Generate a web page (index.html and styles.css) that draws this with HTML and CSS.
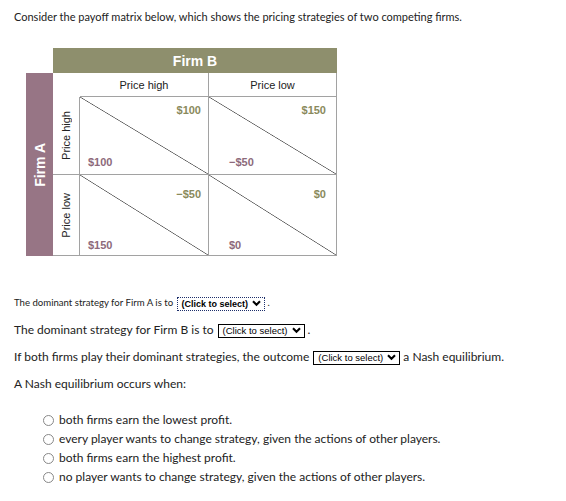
FILE: index.html
```html
<!DOCTYPE html>
<html>
<head>
<meta charset="utf-8">
<link rel="stylesheet" href="styles.css">
</head>
<body>
<p class="intro">Consider the payoff matrix below, which shows the pricing strategies of two competing firms.</p>

<div class="matrix">
  <div class="firm-b">Firm B</div>
  <div class="firm-a"><span>Firm A</span></div>
  <div class="corner"></div>
  <div class="colhead c1">Price high</div>
  <div class="colhead c2">Price low</div>

  <div class="rowhead r1"><span>Price high</span></div>
  <div class="cell c1 r1"><span class="pb">$100</span><span class="pa">$100</span></div>
  <div class="cell c2 r1"><span class="pb">$150</span><span class="pa">&minus;$50</span></div>

  <div class="rowhead r2"><span>Price low</span></div>
  <div class="cell c1 r2"><span class="pb">&minus;$50</span><span class="pa">$150</span></div>
  <div class="cell c2 r2"><span class="pb">$0</span><span class="pa">$0</span></div>
</div>

<p class="q small">The dominant strategy for Firm A is to <span class="dd focus">(Click to select)<svg class="chev" viewBox="0 0 10 8"><path d="M1 1.5 L5 5.5 L9 1.5" fill="none" stroke="#000" stroke-width="2.4"/></svg></span> .</p>
<p class="q">The dominant strategy for Firm B is to <span class="dd">(Click to select)<svg class="chev" viewBox="0 0 10 8"><path d="M1 1.5 L5 5.5 L9 1.5" fill="none" stroke="#000" stroke-width="2.4"/></svg></span> .</p>
<p class="q">If both firms play their dominant strategies, the outcome <span class="dd">(Click to select)<svg class="chev" viewBox="0 0 10 8"><path d="M1 1.5 L5 5.5 L9 1.5" fill="none" stroke="#000" stroke-width="2.4"/></svg></span> a Nash equilibrium.</p>
<p class="q">A Nash equilibrium occurs when:</p>

<ul class="options">
  <li><span class="radio"></span>both firms earn the lowest profit.</li>
  <li><span class="radio"></span>every player wants to change strategy, given the actions of other players.</li>
  <li><span class="radio"></span>both firms earn the highest profit.</li>
  <li><span class="radio"></span>no player wants to change strategy, given the actions of other players.</li>
</ul>
</body>
</html>
```

FILE: styles.css
```css
html, body {
  margin: 0;
  padding: 0;
  background: #fff;
}
body {
  font-family: "Lato", "Liberation Sans", sans-serif;
  font-size: 12px;
  color: #222;
  padding-left: 14px;
}
p { margin: 0; }

.intro {
  padding-top: 10px;
  line-height: 14px;
  font-size: 11px;
}

.matrix {
  margin-top: 24px;
  margin-left: 12px;
  width: 311px;
  display: grid;
  grid-template-columns: 27px 27px 129px 128px;
  grid-template-rows: 25px 24px 78px 81px;
  font-family: "Liberation Sans", Arial, sans-serif;
}
.firm-b {
  grid-column: 2 / 5;
  grid-row: 1;
  background: #8e8f6d;
  color: #fff;
  font-weight: bold;
  font-size: 14px;
  display: flex;
  align-items: center;
  justify-content: center;
}
.firm-a {
  grid-column: 1;
  grid-row: 2 / 5;
  background: #977585;
  color: #fff;
  font-weight: bold;
  font-size: 14px;
  display: flex;
  align-items: center;
  justify-content: center;
}
.firm-a span, .rowhead span {
  writing-mode: vertical-rl;
  transform: rotate(180deg);
  white-space: nowrap;
}
.corner { grid-column: 2; grid-row: 2; }
.colhead {
  grid-row: 2;
  font-size: 11px;
  color: #222;
  border-right: 1px solid #a2a2a2;
  border-bottom: 1px solid #a2a2a2;
  display: flex;
  align-items: center;
  justify-content: center;
}
.rowhead {
  grid-column: 2;
  font-size: 11px;
  color: #222;
  border-right: 1px solid #a2a2a2;
  border-bottom: 1px solid #a2a2a2;
  display: flex;
  align-items: center;
  justify-content: center;
}
.c1 { grid-column: 3; }
.c2 { grid-column: 4; }
.r1 { grid-row: 3; }
.r2 { grid-row: 4; }
.cell {
  border-right: 1px solid #a2a2a2;
  border-bottom: 1px solid #a2a2a2;
  background: linear-gradient(to top right, rgba(85,85,85,0) calc(50% - 0.7px), #555 50%, rgba(85,85,85,0) calc(50% + 0.7px));
  display: flex;
  flex-direction: column;
  justify-content: space-between;
  font-size: 11px;
  font-weight: bold;
  padding: 7px 7px 6px 8px;
}
.pb { align-self: flex-end; color: #8a8a5c; }
.pa { align-self: flex-start; color: #8d6a7b; }
.cell.c2 { padding-left: 20px; padding-right: 10px; }
.cell.r2 { padding-top: 13px; padding-bottom: 4px; }

.q {
  line-height: 14px;
  margin-top: 12px;
}
.q.small {
  font-size: 9.6px;
  margin-top: 40px;
}
.dd {
  display: inline-flex;
  align-items: center;
  border: 1px solid #000;
  font-family: "Liberation Sans", Arial, sans-serif;
  font-size: 9.5px;
  color: #000;
  padding: 0 3px 0 4px;
  height: 12px;
  line-height: 12px;
  vertical-align: middle;
  margin-left: 1px;
}
.dd.focus {
  border: 1px dotted #1d2f6b;
  font-weight: bold;
  font-size: 9px;
}
.chev {
  width: 9px;
  height: 7px;
  margin-left: 4px;
}

.options {
  list-style: none;
  margin: 20px 0 0 0;
  padding: 0 0 0 29px;
}
.options li {
  display: flex;
  align-items: center;
  height: 19px;
  line-height: 14px;
}
.radio {
  width: 9px;
  height: 9px;
  border: 1px solid #888;
  border-radius: 50%;
  margin-right: 5px;
  flex: none;
}
```
